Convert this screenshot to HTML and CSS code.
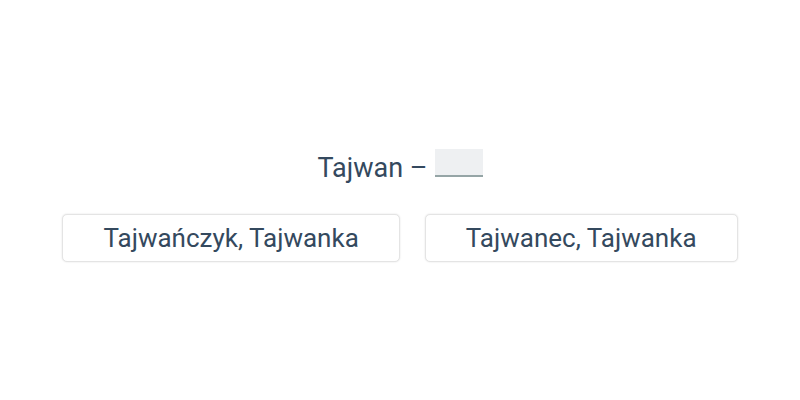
FILE: index.html
```html
<!DOCTYPE html>
<html lang="pl">
<head>
<meta charset="utf-8">
<link rel="stylesheet" href="styles.css">
</head>
<body>
<main class="quiz">
  <p class="question">Tajwan – <span class="blank"></span></p>
  <div class="options">
    <button class="option">Tajwańczyk, Tajwanka</button>
    <button class="option">Tajwanec, Tajwanka</button>
  </div>
</main>
</body>
</html>
```

FILE: styles.css
```css
html, body {
  margin: 0;
  padding: 0;
  background: #ffffff;
}
body {
  width: 800px;
  height: 400px;
  font-family: Roboto, "Liberation Sans", sans-serif;
  color: #34495e;
}
.quiz {
  box-sizing: border-box;
  height: 400px;
  padding-top: 9px;
  display: flex;
  flex-direction: column;
  align-items: center;
  justify-content: center;
  gap: 31px;
}
.question {
  margin: 0;
  font-size: 27px;
  line-height: 30px;
  display: flex;
  align-items: baseline;
  gap: 7px;
  margin-top: 2px;
}
.blank {
  display: inline-block;
  width: 48px;
  height: 28px;
  background: #eef0f2;
  border-bottom: 2px solid #95a5a6;
  box-sizing: border-box;
}
.options {
  display: flex;
  gap: 25px;
}
.option {
  font-family: Roboto, "Liberation Sans", sans-serif;
  font-size: 26px;
  color: #34495e;
  background: #ffffff;
  border: 1px solid #e4e4e4;
  border-radius: 5px;
  box-shadow: 0 0 2px rgba(0,0,0,0.12);
  padding: 0 40px;
  height: 48px;
  line-height: 46px;
  cursor: pointer;
}
```
